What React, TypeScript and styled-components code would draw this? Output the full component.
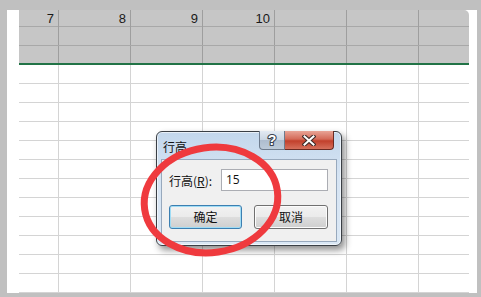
import React from 'react';
import styled, { createGlobalStyle } from 'styled-components';

const GlobalStyle = createGlobalStyle`
  html, body {
    margin: 0;
    padding: 0;
    background: #c0c0c0;
  }
`;

const colWidths = [40, 72, 72, 72, 72, 72, 50];
const headerNumbers = ['7', '8', '9', '10', '', '', ''];
const bodyRows = 12;

const App: React.FC = () => {
  return (
    <Frame>
      <GlobalStyle />
      <Paper>
        <Sheet>
          <Header>
            <HeaderRow $height={17}>
              {colWidths.map((w, i) => (
                <HeaderCell key={i} $last={i === colWidths.length - 1}>{headerNumbers[i]}</HeaderCell>
              ))}
            </HeaderRow>
            <HeaderRow $height={19}>
              {colWidths.map((w, i) => (
                <HeaderCell key={i} $last={i === colWidths.length - 1} />
              ))}
            </HeaderRow>
            <HeaderRow $height={17} $noBorder>
              {colWidths.map((w, i) => (
                <HeaderCell key={i} $last={i === colWidths.length - 1} />
              ))}
            </HeaderRow>
          </Header>
          <GreenLine />
          {Array(bodyRows).fill(0).map((_, r) => (
            <BodyRow key={r}>
              {colWidths.map((w, i) => (
                <BodyCell key={i} $last={i === colWidths.length - 1} />
              ))}
            </BodyRow>
          ))}
        </Sheet>
      </Paper>

      <Dialog>
        <TitleBar>
          <Title>行高</Title>
          <CaptionButtons>
            <HelpButton>
              <svg width="12" height="16" viewBox="0 0 12 16">
                <text x="6" y="13" textAnchor="middle" fontFamily="Liberation Sans, Arial, sans-serif" fontWeight="bold" fontSize="14" fill="#ffffff" stroke="#3b4350" strokeWidth="2.2" paintOrder="stroke" strokeLinejoin="round">?</text>
              </svg>
            </HelpButton>
            <CloseButton>
              <svg width="14" height="11" viewBox="0 0 14 11">
                <path d="M2.5 1.5 L11.5 9.5 M11.5 1.5 L2.5 9.5" stroke="#3e2a28" strokeWidth="4.2" strokeLinecap="square" />
                <path d="M2.5 1.5 L11.5 9.5 M11.5 1.5 L2.5 9.5" stroke="#ffffff" strokeWidth="2" strokeLinecap="square" />
              </svg>
            </CloseButton>
          </CaptionButtons>
        </TitleBar>
        <Content>
          <FieldRow>
            <Label>行高(<u>R</u>):</Label>
            <Input>15</Input>
          </FieldRow>
          <ButtonRow>
            <Button $default>确定</Button>
            <Button>取消</Button>
          </ButtonRow>
        </Content>
      </Dialog>

      <Circle width="150" height="124" viewBox="0 0 150 124">
        <ellipse cx="75" cy="62" rx="67" ry="52.5" fill="none" stroke="#ef3a3e" strokeWidth="7" transform="rotate(-8 75 62)" />
      </Circle>
    </Frame>
  );
};

const Frame = styled.div`
  position: relative;
  width: 481px;
  height: 297px;
  box-sizing: border-box;
  padding: 10px 4px 4px 7px;
  background: #c0c0c0;
  display: flex;
  overflow: hidden;
`;

const Paper = styled.div`
  flex: 1;
  background: #ffffff;
  padding: 0 8px 0 12px;
  overflow: hidden;
`;

const Sheet = styled.div`
  display: flex;
  flex-direction: column;
  width: 450px;
`;

const Header = styled.div`
  background: #c6c6c6;
  border-top-right-radius: 5px;
  display: flex;
  flex-direction: column;
`;

const HeaderRow = styled.div<{ $height: number; $noBorder?: boolean }>`
  display: grid;
  grid-template-columns: ${colWidths.map((w) => `${w}px`).join(' ')};
  height: ${(p) => p.$height}px;
  box-sizing: border-box;
  border-bottom: ${(p) => (p.$noBorder ? 'none' : '1px solid #a8a8a8')};
`;

const HeaderCell = styled.div<{ $last?: boolean }>`
  box-sizing: border-box;
  border-right: ${(p) => (p.$last ? 'none' : '1px solid #9e9e9e')};
  font-family: 'Liberation Sans', Arial, sans-serif;
  font-size: 13px;
  line-height: 17px;
  color: #1a1a1a;
  text-align: right;
  padding-right: 4px;
`;

const GreenLine = styled.div`
  height: 2px;
  background: #217346;
`;

const BodyRow = styled.div`
  display: grid;
  grid-template-columns: ${colWidths.map((w) => `${w}px`).join(' ')};
  height: 19px;
  box-sizing: border-box;
  border-bottom: 1px solid #d4d4d4;
`;

const BodyCell = styled.div<{ $last?: boolean }>`
  box-sizing: border-box;
  border-right: ${(p) => (p.$last ? 'none' : '1px solid #d4d4d4')};
`;

const Dialog = styled.div`
  position: absolute;
  left: 156px;
  top: 131px;
  width: 186px;
  height: 115px;
  box-sizing: border-box;
  border: 1px solid #3a3f45;
  border-radius: 6px;
  background: linear-gradient(180deg, #c3d7ec 0%, #d6e4f3 40%, #dbe8f5 100%);
  box-shadow: 3px 4px 7px rgba(0, 0, 0, 0.45), inset 0 0 0 1px rgba(255, 255, 255, 0.6);
  display: flex;
  flex-direction: column;
  padding: 0 4px 3px 4px;
`;

const TitleBar = styled.div`
  height: 27px;
  display: flex;
  justify-content: space-between;
  align-items: flex-start;
`;

const Title = styled.div`
  font-family: 'Noto Sans CJK SC', 'Noto Sans', sans-serif;
  font-size: 12px;
  line-height: 14px;
  color: #111;
  padding: 8px 0 0 2px;
`;

const CaptionButtons = styled.div`
  display: flex;
  margin-top: -1px;
  margin-right: 3px;
`;

const HelpButton = styled.div`
  width: 26px;
  height: 19px;
  box-sizing: border-box;
  border: 1px solid #6d7b8d;
  border-top: none;
  border-bottom-left-radius: 4px;
  background: linear-gradient(180deg, #e3eaf2 0%, #c9d5e2 50%, #aebdcf 51%, #bccad9 100%);
  display: flex;
  align-items: center;
  justify-content: center;
`;

const CloseButton = styled.div`
  width: 49px;
  height: 19px;
  box-sizing: border-box;
  border: 1px solid #6b2a22;
  border-top: none;
  border-left: none;
  border-bottom-right-radius: 4px;
  background: linear-gradient(180deg, #e8a496 0%, #d46a58 45%, #c2402c 55%, #d6705c 100%);
  display: flex;
  align-items: center;
  justify-content: center;
`;

const Content = styled.div`
  flex: 1;
  background: #f0f0f0;
  border: 1px solid #98a9bd;
  display: flex;
  flex-direction: column;
  padding: 9px 8px 0 7px;
`;

const FieldRow = styled.div`
  display: flex;
  align-items: center;
  justify-content: space-between;
`;

const Label = styled.div`
  font-family: 'Noto Sans CJK SC', 'Noto Sans', sans-serif;
  font-size: 12px;
  color: #111;
  u {
    text-decoration: underline;
    text-underline-offset: 1px;
  }
`;

const Input = styled.div`
  width: 107px;
  height: 22px;
  box-sizing: border-box;
  background: #ffffff;
  border: 1px solid #abadb3;
  font-family: 'Open Sans', 'Liberation Sans', sans-serif;
  font-size: 12px;
  line-height: 20px;
  padding-left: 4px;
  color: #111;
`;

const ButtonRow = styled.div`
  display: flex;
  justify-content: space-between;
  margin-top: 14px;
`;

const Button = styled.div<{ $default?: boolean }>`
  width: ${(p) => (p.$default ? 73 : 74)}px;
  height: 24px;
  box-sizing: border-box;
  border-radius: 3px;
  border: 1px solid ${(p) => (p.$default ? '#3c7fb1' : '#707070')};
  background: linear-gradient(180deg, #f2f2f2 0%, #ebebeb 48%, #dddddd 52%, #cfcfcf 100%);
  box-shadow: inset 0 0 0 1px ${(p) => (p.$default ? '#9fdcf5' : '#fcfcfc')};
  font-family: 'Noto Sans CJK SC', 'Noto Sans', sans-serif;
  font-size: 12px;
  line-height: 22px;
  text-align: center;
  color: #111;
`;

const Circle = styled.svg`
  position: absolute;
  left: 136px;
  top: 138px;
  pointer-events: none;
`;

export default App;
